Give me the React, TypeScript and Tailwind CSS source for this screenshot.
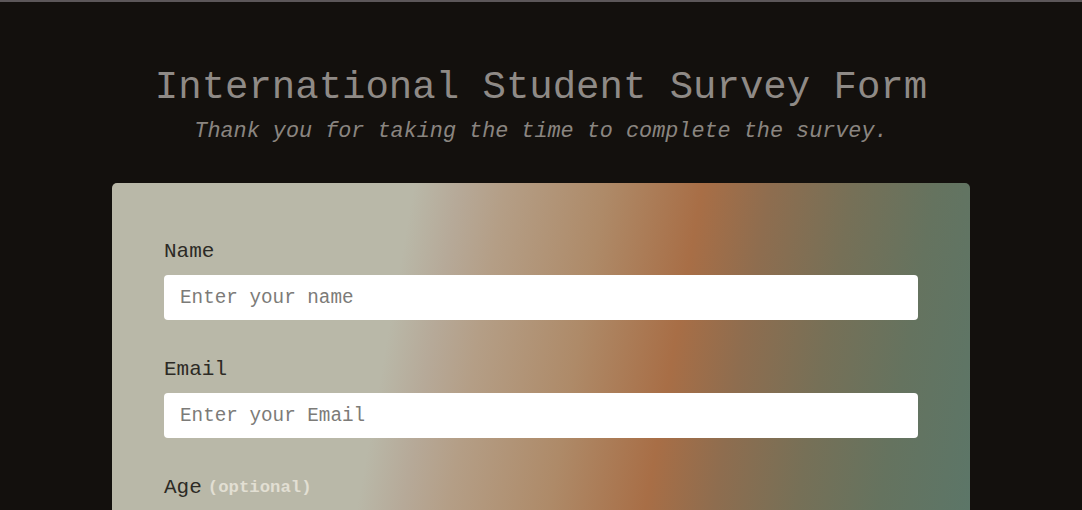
export default function App() {
    const fields = [
        { label: "Name", placeholder: "Enter your name", optional: false },
        { label: "Email", placeholder: "Enter your Email", optional: false },
        { label: "Age", placeholder: "Age", optional: true },
    ];

    return (
        <div className="min-h-screen bg-[#13100d] font-['Liberation_Mono',monospace]">
            <div className="h-[2px] bg-[#5c5759]" />
            <header className="pt-[60px] pb-[37px] text-center">
                <h1 className="text-[39px] leading-[52px] text-[#8f8a86]">International Student Survey Form</h1>
                <p className="mt-[4px] text-[21.8px] leading-[28px] italic text-[#8a8580]">
                    Thank you for taking the time to complete the survey.
                </p>
            </header>

            <form className="mx-auto w-[858px] rounded-[5px] bg-[#5c7668] bg-[linear-gradient(100deg,#b9b8a8_0%,#b9b8a8_33%,#b6a998_38%,#b49e86_43%,#ae8a68_54%,#a86e46_64.5%,#8e6d4f_72%,#767057_81%,#65735f_90%,#5c7668_100%)] bg-[length:100%_330px] bg-no-repeat px-[52px] pt-[55px] pb-12">
                {fields.map((field) => (
                    <div key={field.label} className="mb-[36px]">
                        <label className="mb-[9px] flex h-[28px] items-center gap-[6px] text-[21px] text-[#2c2a25]">
                            {field.label}
                            {field.optional && (
                                <span className="text-[17.3px] font-bold text-[#e2dfd3]">(optional)</span>
                            )}
                        </label>
                        <input
                            type="text"
                            placeholder={field.placeholder}
                            className="h-[45px] w-full rounded-[4px] bg-white px-4 text-[19.3px] text-[#333] outline-none placeholder:text-[#7c7b78]"
                        />
                    </div>
                ))}
            </form>
        </div>
    );
}
